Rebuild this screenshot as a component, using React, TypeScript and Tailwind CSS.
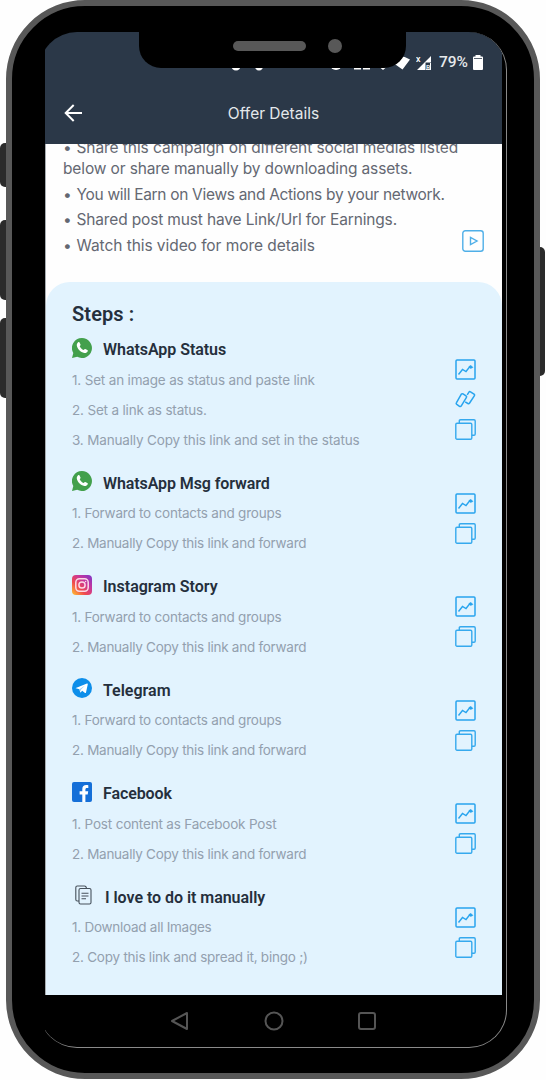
import React from "react";

type IconName = "chart" | "link" | "copy";
type Step = { text: string; track: string };
type Section = { title: string; track: string; logo: React.ReactNode; steps: Step[]; icons: IconName[]; wide?: boolean };

const WhatsApp = () => (
  <svg width="20" height="20" viewBox="0 0 20 20">
    <path d="M10 0a10 10 0 1 1-4.8 18.8L0 20l1.3-5A10 10 0 0 1 10 0z" fill="#43a04c" />
    <path d="M6.1 4.3c.6-.4 1.1-.4 1.4.2l1 2.1c.2.5-.1.9-.8 1.6.9 1.8 2.1 3 4 3.9.8-1 1.1-1.3 1.6-1.1l2 1c.6.3.6.7.4 1.3-.6 1.3-2 2-3.4 1.7-3.8-.8-6.9-3.9-7.5-7.5-.1-1.200.4-2.500 1.300-3.200z" fill="#fff" />
  </svg>
);

const Instagram = () => (
  <svg width="20" height="20" viewBox="0 0 20 20">
    <defs>
      <linearGradient id="ig-base" x1="1" y1="0" x2="0" y2="1">
        <stop offset="0" stopColor="#7c35c9" />
        <stop offset=".35" stopColor="#c7369c" />
        <stop offset=".65" stopColor="#f04a4f" />
        <stop offset="1" stopColor="#ffc52e" />
      </linearGradient>
    </defs>
    <rect width="20" height="20" rx="4" fill="url(#ig-base)" />
    <g fill="none" stroke="#fbd9e6" strokeWidth="1.5">
      <rect x="3.8" y="3.8" width="12.4" height="12.4" rx="3.6" />
      <circle cx="10" cy="10" r="3.1" />
    </g>
    <circle cx="13.6" cy="6.5" r=".8" fill="#fbd9e6" />
  </svg>
);

const Telegram = () => (
  <svg width="20" height="20" viewBox="0 0 20 20">
    <circle cx="10" cy="10" r="10" fill="#0d8eea" />
    <path d="M3.8 9.9 15 5.5c.5-.2.9.1.8.7l-1.8 8.3c-.1.6-.5.7-1 .4L10.200 12.8l-1.4 1.5c-.4.3-.6.2-.7-.3L7.4 11.3l-3.5-1c-.4-.1-.5-.2-.1-.4z" fill="#fff" />
    <path d="m7.5 11.2 5.5-3.6-4.2 4.2-.4 2.1z" fill="#9bcff3" />
  </svg>
);

const Facebook = () => (
  <svg width="20" height="20" viewBox="0 0 20 20">
    <rect width="20" height="20" rx="2" fill="#156fd8" />
    <path d="M10.3 20v-7.5H7.6V9.3h2.7V7.2c0-2.8 1.5-4.2 4-4.2.8 0 1.5.1 2 .2V6h-1.3c-1.2 0-1.6.6-1.6 1.6v1.7h2.8l-.5 3.2h-2.3V20z" fill="#fff" />
  </svg>
);

const Papers = () => (
  <svg width="17" height="20" viewBox="0 0 17 20" fill="none" stroke="#46505b" strokeWidth="1.1" className="ml-[3px]">
    <path d="M4 16H2.3Q.8 16 .8 14.5V2.500Q.8 1 2.3 1h7.200Q11 1 11.500 3" />
    <path d="M5.5 3.5h9q1.500 0 1.500 1.500v12.500q0 1.500-1.500 1.500h-9Q4 19 4 17.500V5q0-1.500 1.500-1.500z" />
    <path d="M6.500 8.300H13.500M6.500 11H13.500M6.500 13.700h4.500" />
  </svg>
);

const ActionIcon = ({ name }: { name: IconName }) => {
  if (name === "chart")
    return (
      <svg width="21" height="21" viewBox="0 0 21 21" fill="none" stroke="#28a4ee" strokeWidth="1.5">
        <rect x="1" y="1" width="19" height="19" rx="1" />
        <path d="m3.500 15.500 4-5 3.500 2 3.500-4.500 2.500.5" strokeWidth="1.400" />
        <path d="M14 7.500 16 6.500l1.800 2-2.600.8z" fill="#28a4ee" strokeWidth=".8" />
      </svg>
    );
  if (name === "link")
    return (
      <svg width="21" height="21" viewBox="0 0 21 21" fill="none" stroke="#28a4ee" strokeWidth="1.5" strokeLinejoin="round">
        <path d="M6.200 5.300q.8-1 1.800-.4l3 2q1 .6.300 1.700l-5 8.200q-.7 1.100-1.800.5l-2.700-1.900q-1-.7-.3-1.800z" />
        <path d="m12.200 5.800 1.600-2.500q.7-1.100 1.700-.5l3.500 2.300q1 .7.300 1.700l-4.700 7.200q-.7 1-1.700.5l-2.700-1.700" />
      </svg>
    );
  return (
    <svg width="21" height="21" viewBox="0 0 21 21" fill="none" stroke="#35a9ee" strokeWidth="1.400">
      <path d="M4.300 4V2q0-1.200 1.200-1.200H19q1.200 0 1.200 1.200v13q0 1.200-1.200 1.200h-2" />
      <rect x=".8" y="4.200" width="16" height="16" rx="1.200" />
    </svg>
  );
};

const forward: Step = { text: "1. Forward to contacts and groups", track: "tracking-[-0.22px]" };
const copyForward: Step = { text: "2. Manually Copy this link and forward", track: "tracking-[-0.26px]" };

const sections: Section[] = [
  {
    title: "WhatsApp Status",
    track: "tracking-[-0.05px]",
    logo: <WhatsApp />,
    steps: [
      { text: "1. Set an image as status and paste link", track: "tracking-[-0.17px]" },
      { text: "2. Set a link as status.", track: "tracking-[-0.17px]" },
      { text: "3. Manually Copy this link and set in the status", track: "tracking-[-0.165px]" },
    ],
    icons: ["chart", "link", "copy"],
  },
  { title: "WhatsApp Msg forward", track: "tracking-[-0.1px]", logo: <WhatsApp />, steps: [forward, copyForward], icons: ["chart", "copy"] },
  { title: "Instagram Story", track: "tracking-[0px]", logo: <Instagram />, steps: [forward, copyForward], icons: ["chart", "copy"] },
  { title: "Telegram", track: "tracking-[0px]", logo: <Telegram />, steps: [forward, copyForward], icons: ["chart", "copy"] },
  {
    title: "Facebook",
    track: "tracking-[-0.1px]",
    logo: <Facebook />,
    steps: [{ text: "1. Post content as Facebook Post", track: "tracking-[-0.19px]" }, copyForward],
    icons: ["chart", "copy"],
  },
  {
    title: "I love to do it manually",
    track: "tracking-[-0.04px]",
    logo: <Papers />,
    wide: true,
    steps: [
      { text: "1. Download all Images", track: "tracking-[-0.26px]" },
      { text: "2. Copy this link and spread it, bingo ;)", track: "tracking-[-0.23px]" },
    ],
    icons: ["chart", "copy"],
  },
];

const StepSection = ({ section }: { section: Section }) => (
  <section className="mb-[11.5px]">
    <div className="flex h-8 items-center">
      <div className={section.wide ? "w-[33px]" : "w-[31px]"}>
        <div className="-mt-[3px]">{section.logo}</div>
      </div>
      <h3 className={`pt-[2px] font-['Roboto',sans-serif] text-[16px] font-semibold text-[#252f3c] ${section.track}`}>{section.title}</h3>
    </div>
    <div className="flex justify-between">
      <ol>
        {section.steps.map((s) => (
          <li key={s.text} className={`flex h-[30px] items-center whitespace-nowrap text-[13.5px] text-[#93a0ae] ${s.track}`}>
            {s.text}
          </li>
        ))}
      </ol>
      <div className="-mt-[10.500px] -mb-[20px]">
        {section.icons.map((n) => (
          <div key={n} className="flex h-[30px] items-center">
            <ActionIcon name={n} />
          </div>
        ))}
      </div>
    </div>
  </section>
);

const Bullet = () => <span className="inline-block w-[13.5px] tracking-normal">•</span>;

export default function App() {
  return (
    <div className="relative h-[1080px] w-[546px] overflow-hidden bg-[#fefefe] font-['Inter',sans-serif]">
      <div className="absolute top-[143px] left-0 h-[44px] w-3 rounded-[5px] bg-[#2b2b2b]" />
      <div className="absolute top-[220px] left-0 h-[80px] w-3 rounded-[5px] bg-[#2b2b2b]" />
      <div className="absolute top-[318px] left-0 h-[80px] w-3 rounded-[5px] bg-[#2b2b2b]" />
      <div className="absolute top-[247px] right-[1px] h-[129px] w-3 rounded-[5px] bg-[#2b2b2b]" />

      <div className="relative ml-[6px] h-[1079px] w-[534px] rounded-[79px] border-[6px] border-[#585858] bg-black pt-[26px] pl-[33px]">
        <div className="w-[462px] overflow-hidden">
          <div className="-ml-[6px] h-[1016px] w-[468px] overflow-hidden rounded-[38px] border-r border-b border-[#8a8a8a] pl-[6px]">
            <div className="w-[457px]">
              <header className="relative z-10 h-[111.500px] bg-[#2b3848]">
                <div className="flex h-[50px] items-center justify-end pt-[11px] pr-[19px] text-white">
                  <svg width="230" height="18" viewBox="-100 0 230 18" fill="#fff">
                    <ellipse cx="-46" cy="11" rx="5" ry="5.500" />
                    <ellipse cx="-23" cy="11" rx="4.500" ry="5.500" />
                    <ellipse cx="54" cy="10" rx="6" ry="6" />
                    <path d="M72 14h7v1.500h-7zM81 14h7v1.500h-7zM98 13.500h6l-3 2.500zM107 6q10-7 21-.5L120.500 15.500z" />
                  </svg>
                  <svg width="16" height="16" viewBox="0 0 16 16" className="mr-[7px] ml-[4px]">
                    <path d="M1 15 15 1v6.500H9.500V15z" fill="#fff" />
                    <path d="M14 8h1v7h-5v-1h4z" fill="#fff" />
                    <text x="0" y="6.500" fontSize="7" fontWeight="700" fill="#fff" fontFamily="Roboto">X</text>
                    <text x="10" y="14.500" fontSize="7" fontWeight="700" fill="#dfe2e6" fontFamily="Roboto">R</text>
                  </svg>
                  <span className="mr-[5px] font-['Roboto',sans-serif] text-[15.5px] font-medium text-[#e6e9ec]">79%</span>
                  <svg width="10" height="15" viewBox="0 0 10 15" fill="#fff">
                    <path d="M2.500 0h5v1.500H9q1 0 1 1V14q0 1-1 1H1q-1 0-1-1V2.500q0-1 1-1h1.500z" />
                    <path d="M1 3h8v1H1z" fill="#59636f" />
                  </svg>
                </div>
                <div className="grid h-[62px] grid-cols-[60px_1fr_60px] items-center">
                  <svg width="19" height="18" viewBox="0 0 19 18" fill="none" stroke="#fff" strokeWidth="2" className="ml-[19px]">
                    <path d="M18 9H2M9.700 1 1.700 9l8 8" />
                  </svg>
                  <h1 className="pt-px text-center text-[15.5px] tracking-[0px] text-[#e4e8ec]">Offer Details</h1>
                </div>
              </header>

              <main className="h-[851px] overflow-hidden border-l border-[#a7acb0] bg-[#fefefe]">
                <div className="-mt-[6.500px] pl-[17px] text-[15.5px] leading-[21px] whitespace-nowrap text-[#646872]">
                  <p className="tracking-[-0.075px]"><Bullet />Share this campaign on different social medias listed</p>
                  <p className="mb-[4.500px] tracking-[-0.13px]">below or share manually by downloading assets.</p>
                  <p className="mb-[4.500px] tracking-[-0.31px]"><Bullet />You will Earn on Views and Actions by your network.</p>
                  <p className="mb-[4.500px] tracking-[-0.15px]"><Bullet />Shared post must have Link/Url for Earnings.</p>
                  <div className="flex justify-between pr-[18px]">
                    <p className="tracking-[-0.06px]"><Bullet />Watch this video for more details</p>
                    <svg width="22" height="22" viewBox="0 0 22 22" fill="none" stroke="#4fafe8" strokeWidth="1.400" className="-mt-[5px]">
                      <rect x=".8" y=".8" width="20.400" height="20.400" rx="2.500" />
                      <path d="M8.500 7.500v7l6.500-3.500z" />
                    </svg>
                  </div>
                </div>

                <div className="mt-[26.500px] h-[720px] rounded-t-[24px] bg-[#e2f3fe] pt-[18px] pr-[26.500px] pl-[26px]">
                  <h2 className="mb-[4px] h-[29px] font-['Roboto',sans-serif] text-[20px] leading-[29px] font-semibold tracking-[0.1px] text-[#252f3c]">Steps :</h2>
                  {sections.map((s) => (
                    <StepSection key={s.title} section={s} />
                  ))}
                </div>
              </main>

              <nav className="flex h-[53px] items-center justify-center gap-[73.500px]">
                <svg width="20" height="20" viewBox="0 0 20 20" fill="none" stroke="#555" strokeWidth="2" strokeLinejoin="round">
                  <path d="M17 2v16L2 10z" />
                </svg>
                <svg width="20" height="20" viewBox="0 0 20 20" fill="none" stroke="#555" strokeWidth="2">
                  <circle cx="10" cy="10" r="8.500" />
                </svg>
                <svg width="20" height="20" viewBox="0 0 20 20" fill="none" stroke="#555" strokeWidth="2">
                  <rect x="2" y="2" width="16" height="16" rx="2" />
                </svg>
              </nav>
            </div>
          </div>
        </div>
      </div>

      <div className="absolute top-[31px] left-[139px] z-20 h-[37px] w-[267px] rounded-b-[22px] bg-black">
        <div className="absolute top-[10px] left-[94px] h-[10px] w-[73px] rounded-full bg-[#585858]" />
        <div className="absolute top-[8px] left-[189px] h-[14px] w-[14px] rounded-full bg-[#585858]" />
      </div>
    </div>
  );
}
